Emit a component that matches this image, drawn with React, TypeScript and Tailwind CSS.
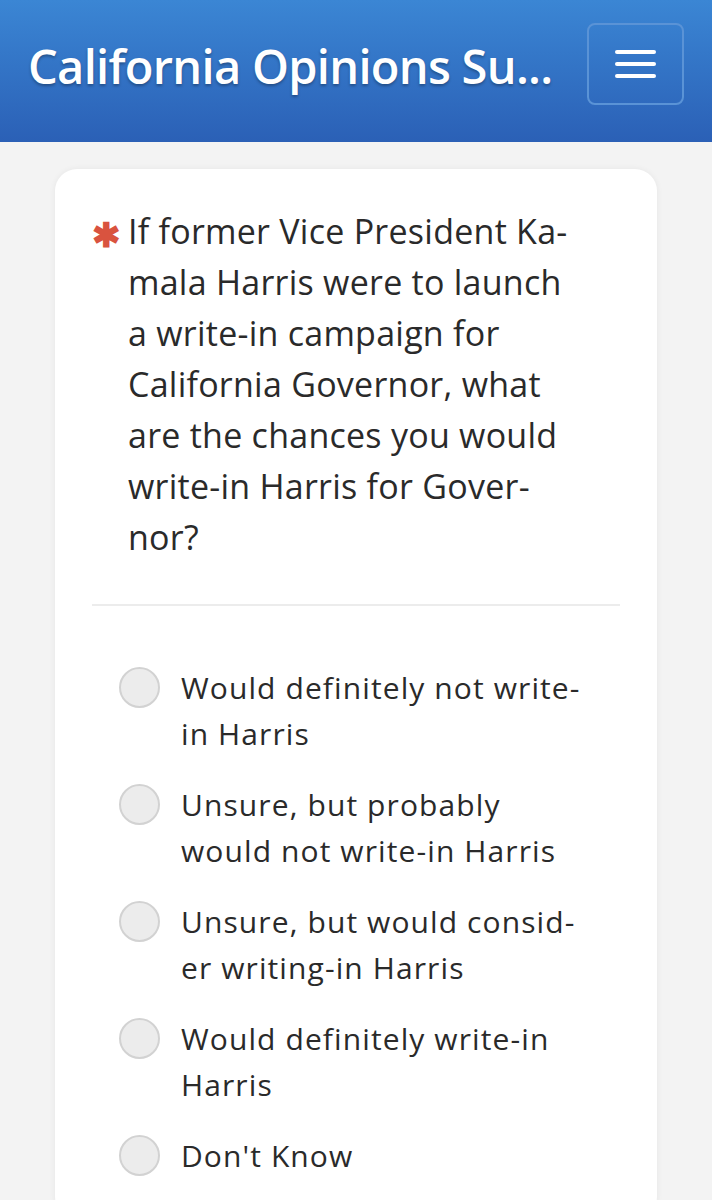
import React from 'react';

const options: string[][] = [
  ['Would definitely not write-', 'in Harris'],
  ['Unsure, but probably', 'would not write-in Harris'],
  ['Unsure, but would consid-', 'er writing-in Harris'],
  ['Would definitely write-in', 'Harris'],
  ["Don't Know"],
];

const questionLines = [
  'If former Vice President Ka-',
  'mala Harris were to launch',
  'a write-in campaign for',
  'California Governor, what',
  'are the chances you would',
  'write-in Harris for Gover-',
  'nor?',
];

const Header = () => (
  <header className="h-[142px] bg-gradient-to-b from-[#3b86d4] to-[#2b60b6] flex items-center justify-between pl-[28px] pr-[28px]">
    <h1 className="text-white text-[47px] font-semibold tracking-[-0.7px] whitespace-nowrap [text-shadow:0_2px_3px_rgba(0,0,0,0.3)] mt-[-10px]">
      California Opinions Su...
    </h1>
    <button className="w-[97px] h-[82px] rounded-[8px] border-2 border-[#5a93d6] flex flex-col items-center justify-center gap-[8px] mt-[-15px]">
      <span className="block w-[41px] h-[4px] rounded-full bg-white" />
      <span className="block w-[41px] h-[4px] rounded-full bg-white" />
      <span className="block w-[41px] h-[4px] rounded-full bg-white" />
    </button>
  </header>
);

const Option = ({ lines }: { lines: string[] }) => (
  <label className="flex items-start gap-[21px]">
    <span className="mt-[2px] w-[41px] h-[41px] shrink-0 rounded-full bg-[#ececec] border-2 border-[#d2d2d2]" />
    <span className="text-[30px] leading-[46px] text-[#2a2a2a] tracking-[1.1px]">
      {lines.map((l, i) => (
        <span key={i} className="block whitespace-nowrap">{l}</span>
      ))}
    </span>
  </label>
);

export default function App() {
  return (
    <div className="min-h-[1200px] bg-[#f3f3f3]" style={{ fontFamily: '"Open Sans", "Noto Sans", sans-serif' }}>
      <Header />
      <main className="pt-[27px] px-[55px]">
        <div className="bg-white rounded-[22px] shadow-[0_0_6px_rgba(0,0,0,0.06)] px-[37px] pt-[37px] pb-[40px]">
          <div className="flex items-start gap-[10px] pb-[41px]">
            <span className="text-[#d9533f] text-[34px] leading-[51px] font-bold w-[26px] shrink-0 text-center mt-[3px]">✱</span>
            <p className="text-[34px] leading-[51px] text-[#2a2a2a] tracking-[0.25px]">
              {questionLines.map((l, i) => (
                <span key={i} className="block whitespace-nowrap">{l}</span>
              ))}
            </p>
          </div>
          <div className="h-[2px] bg-[#ececec]" />
          <div className="pl-[27px] pt-[59px] flex flex-col gap-[25px]">
            {options.map((o, i) => (
              <Option key={i} lines={o} />
            ))}
          </div>
        </div>
      </main>
    </div>
  );
}
